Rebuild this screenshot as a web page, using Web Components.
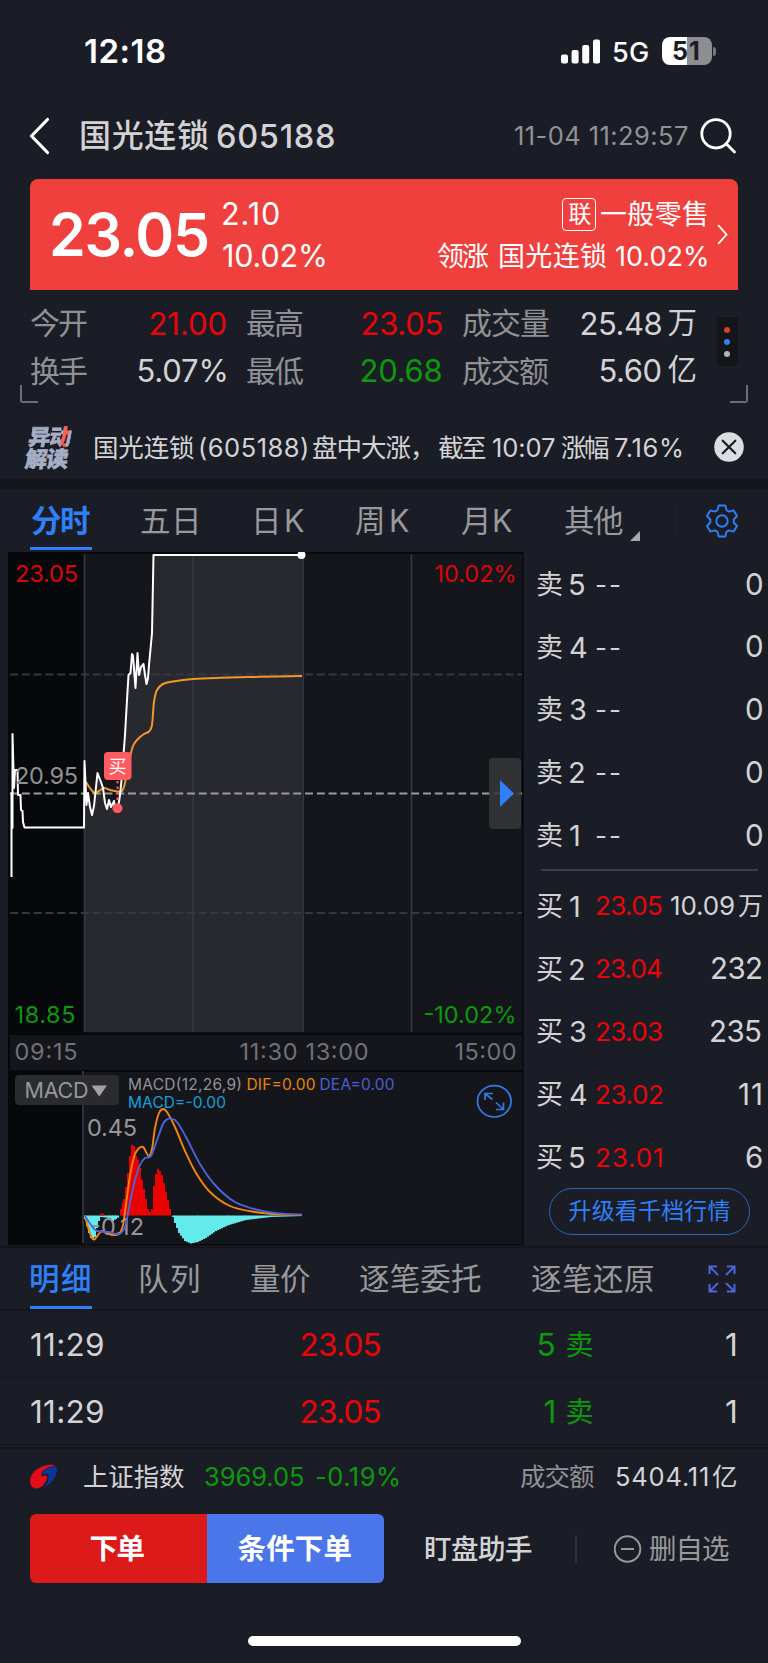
<!DOCTYPE html>
<html lang="zh-CN">
<head>
<meta charset="utf-8">
<title>国光连锁 605188</title>
<style>
body {
  margin: 0;
  background: #1b1d26;
  color: #d3d3d5;
  font-family: Inter, "Noto Sans CJK SC", sans-serif;
}
</style>
</head>
<body>
<stock-page></stock-page>

<script>
// Spreads its text so that the visible glyphs fill exactly `width` pixels.
const measureContext = document.createElement('canvas').getContext('2d');
class FitText extends HTMLElement {
  constructor() {
    super();

    this.attachShadow({ mode: "open" });
    this.shadowRoot.innerHTML = `
<style>
:host {
  display: block;
  flex: none;
  line-height: 1;
}

span {
  display: block;
  white-space: pre;
}
</style>
<span><slot></slot></span>`;
  }

  connectedCallback() {
    const text = this.textContent;
    const width = Number(this.getAttribute("width"));
    const style = getComputedStyle(this);
    measureContext.font = `${style.fontWeight} ${style.fontSize} ${style.fontFamily}`;

    const box = measureContext.measureText(text);
    const ink = box.actualBoundingBoxLeft + box.actualBoundingBoxRight;
    const span = this.shadowRoot.querySelector('span');
    span.style.marginLeft = box.actualBoundingBoxLeft + "px";
    if (text.length > 1) {
      span.style.letterSpacing = (width - ink) / (text.length - 1) + "px";
    }
    this.style.width = width + "px";
  }
}
window.customElements.define('fit-text', FitText);


function defineView(name, html) {
  const template = document.createElement('template');
  template.innerHTML = html;
  window.customElements.define(name, class extends HTMLElement {
    constructor() {
      super();

      this.attachShadow({ mode: "open" });
      this.shadowRoot.appendChild(template.content.cloneNode(true));
    }
  });
}


defineView('status-bar', `
<style>
:host {
  display: flex;
  align-items: center;
  height: 102px;
  padding: 0 52px 0 85px;
  color: #fff;
}

.time {
  font-size: 33px;
  font-weight: 600;
  margin-right: auto;
}

.network {
  font-size: 27px;
  font-weight: 500;
  margin: 2px 14px 0 13px;
}

.battery {
  display: flex;
  align-items: center;
  justify-content: center;
  box-sizing: border-box;
  width: 50px;
  height: 28px;
  padding: 1px 2px 0 0;
  border-radius: 8px;
  background: linear-gradient(90deg, #fff 50%, #8e8e92 50%);
  color: #1b1d26;
  font-size: 25px;
  font-weight: 700;
}

.nub {
  width: 3px;
  height: 9px;
  margin-left: 1px;
  border-radius: 0 3px 3px 0;
  background: #77787d;
}
</style>
<fit-text class="time" width="80">12:18</fit-text>
<svg width="39" height="25" viewBox="0 0 39 25" fill="#fff">
  <rect x="0" y="15.5" width="7" height="9" rx="2"/>
  <rect x="10.6" y="11" width="7" height="13.5" rx="2"/>
  <rect x="21.2" y="6" width="7" height="18.5" rx="2"/>
  <rect x="32" y="0.5" width="7" height="24" rx="2"/>
</svg>
<fit-text class="network" width="35">5G</fit-text>
<div class="battery"><fit-text width="26">51</fit-text></div>
<div class="nub"></div>`);


defineView('stock-header', `
<style>
:host {
  display: flex;
  align-items: center;
  height: 68px;
  padding: 0 31px 0 29px;
}

.name {
  font-size: 32px;
  font-weight: 500;
  margin-left: 30px;
}

.code {
  font-size: 32.5px;
  font-weight: 500;
  margin: 2px auto 0 8px;
}

time {
  font-size: 25.5px;
  color: #909194;
  margin-right: 12px;
}
</style>
<svg width="22" height="38" viewBox="0 0 22 38" fill="none" stroke="#fff" stroke-width="3.2" stroke-linecap="round" stroke-linejoin="round"><path d="M18.5 2.500 2.500 19 18.500 35.500"/></svg>
<fit-text class="name" width="128">国光连锁</fit-text>
<fit-text class="code" width="117">605188</fit-text>
<time><fit-text width="173">11-04 11:29:57</fit-text></time>
<svg width="37" height="36" viewBox="0 0 37 36" fill="none" stroke="#fff" stroke-width="2.8" stroke-linecap="round"><circle cx="16" cy="15.8" r="14.2"/><path d="m26.5 26 8 8"/></svg>`);


defineView('price-banner', `
<style>
:host {
  display: flex;
  align-items: center;
  box-sizing: border-box;
  height: 111px;
  margin: 9px 30px 0;
  padding: 0 10px 0 22px;
  border-radius: 8px 8px 0 0;
  background: #ef403e;
  color: #fff;
}

.price {
  font-size: 59px;
  font-weight: 600;
}

.change, .sector {
  display: flex;
  flex-direction: column;
  padding-top: 2px;
}

.line {
  display: flex;
  align-items: center;
  height: 42px;
}

.change {
  font-size: 30.5px;
  margin: 0 auto 0 15px;
}

.sector {
  align-items: flex-end;
  font-size: 27px;
  margin-right: 10px;
}

.badge {
  display: flex;
  align-items: center;
  justify-content: center;
  box-sizing: border-box;
  width: 34px;
  height: 33px;
  margin-right: 5px;
  border: 1.5px solid #fff;
  border-radius: 4px;
  font-size: 23px;
}
</style>
<fit-text class="price" width="156">23.05</fit-text>
<div class="change">
  <div class="line"><fit-text width="56">2.10</fit-text></div>
  <div class="line"><fit-text width="102">10.02%</fit-text></div>
</div>
<div class="sector">
  <div class="line"><span class="badge"><fit-text width="21">联</fit-text></span><fit-text width="106">一般零售</fit-text></div>
  <div class="line"><fit-text width="52">领涨</fit-text><fit-text width="106" style="margin-left: 11px">国光连锁</fit-text><fit-text width="91" style="margin-left: 10px">10.02%</fit-text></div>
</div>
<svg width="11" height="21" viewBox="0 0 11 21" fill="none" stroke="#fff" stroke-width="1.8"><path d="M1.2 1.2 9.5 10.5 1.2 19.8"/></svg>`);


defineView('quote-stats', `
<style>
:host {
  display: flex;
  position: relative;
  box-sizing: border-box;
  height: 125px;
  padding: 9px 30px 0 31px;
  font-size: 31px;
}

.grid {
  display: grid;
  grid-template-columns: 57px 116px 57px 116px 86px 125px;
  grid-template-rows: 48px 47px;
  align-items: center;
  column-gap: 21.5px;
}

.grid > :nth-child(odd) {
  font-size: 30px;
  color: #909194;
}

.value {
  display: flex;
  gap: 7px;
  justify-content: flex-end;
}

.value :nth-child(2) {
  font-size: 29.5px;
}

.up { color: #ea0508; }
.down { color: #0a9a0c; }

.more {
  display: flex;
  flex-direction: column;
  align-items: center;
  justify-content: center;
  gap: 6px;
  width: 21px;
  height: 49px;
  margin: 18px 0 0 21px;
  border-radius: 3px;
  background: #141519;
}

.more i {
  width: 6px;
  height: 6px;
  border-radius: 50%;
  background: #b4b4b6;
}

.corner {
  position: absolute;
  bottom: 12px;
  left: 20px;
  width: 16px;
  height: 16px;
  border: solid #6d6e74;
  border-width: 0 0 2px 2px;
  border-radius: 0 0 0 3px;
}

.corner.right {
  left: auto;
  right: 20px;
  transform: scaleX(-1);
}
</style>
<div class="grid">
  <fit-text width="56">今开</fit-text><div class="value up"><fit-text width="75">21.00</fit-text></div>
  <fit-text width="56">最高</fit-text><div class="value up"><fit-text width="79">23.05</fit-text></div>
  <fit-text width="86">成交量</fit-text><div class="value"><fit-text width="80">25.48</fit-text><fit-text width="27">万</fit-text></div>
  <fit-text width="56">换手</fit-text><div class="value"><fit-text width="87">5.07%</fit-text></div>
  <fit-text width="56">最低</fit-text><div class="value down"><fit-text width="80">20.68</fit-text></div>
  <fit-text width="86">成交额</fit-text><div class="value"><fit-text width="60">5.60</fit-text><fit-text width="28">亿</fit-text></div>
</div>
<div class="more"><i style="background: #d3402b"></i><i style="background: #2f7ff7"></i><i></i></div>
<div class="corner"></div>
<div class="corner right"></div>`);


defineView('news-line', `
<style>
:host {
  display: flex;
  align-items: center;
  box-sizing: border-box;
  height: 74px;
  padding: 2px 24px 0 27px;
  border-bottom: 10px solid #15161b;
  font-size: 25.5px;
}

.logo {
  display: flex;
  flex-direction: column;
  gap: 0;
  margin-right: 25px;
  color: #a5aec4;
  font-size: 22px;
  font-weight: 900;
  -webkit-text-stroke: .6px;
  transform: skewX(-8deg);
}

.move {
  background: linear-gradient(95deg, #a5aec4 76%, #fb6156 77% 89%, #a5aec4 90%);
  -webkit-background-clip: text;
  color: transparent;
}

svg {
  margin: 0 0 2px auto;
}
</style>
<div class="logo"><fit-text class="move" width="43">异动</fit-text><fit-text width="43">解读</fit-text></div>
<fit-text width="99">国光连锁</fit-text>
<fit-text width="107" style="margin-left: 6px">(605188)</fit-text>
<fit-text width="106" style="margin-left: 6px">盘中大涨，</fit-text>
<fit-text width="48" style="margin-left: 19px">截至</fit-text>
<fit-text width="62" style="margin-left: 7px">10:07</fit-text>
<fit-text width="48" style="margin-left: 6px">涨幅</fit-text>
<fit-text width="67" style="margin-left: 6px">7.16%</fit-text>
<svg width="30" height="30" viewBox="0 0 30 30"><circle cx="15" cy="15" r="14.8" fill="#dcdde1"/><path d="m8.7 8.7 12.6 12.6m0-12.6L8.7 21.3" stroke="#1b1d26" stroke-width="2.2" stroke-linecap="round"/></svg>`);


defineView('tab-item', `
<style>
:host {
  display: flex;
  position: relative;
  align-items: center;
  gap: 9px;
  box-sizing: border-box;
  height: 100%;
  padding-top: 2px;
  font-size: 30.5px;
  color: #98999b;
}

:host([active]) {
  color: #2f80f8;
  font-weight: 500;
}

:host([active])::after {
  content: "";
  position: absolute;
  left: -1px;
  right: -2px;
  bottom: var(--line-bottom, 0);
  height: 3px;
  background: #2f80f8;
}
</style>
<slot></slot>`);


defineView('period-tabs', `
<style>
:host {
  display: flex;
  align-items: center;
  height: 63px;
  padding: 0 29px 0 31px;
  --line-bottom: 2px;
}

.corner {
  align-self: flex-end;
  margin: 0 auto 11px 7px;
}

.rule {
  width: 1px;
  height: 26px;
  margin-right: 28px;
  background: #22242c;
}
</style>
<tab-item active style="font-weight: 700"><fit-text width="59">分时</fit-text></tab-item>
<tab-item style="margin-left: 51px"><fit-text width="56">五日</fit-text></tab-item>
<tab-item style="margin-left: 59px"><fit-text width="20">日</fit-text><fit-text width="19" style="margin-left: 1px">K</fit-text></tab-item>
<tab-item style="margin-left: 51px"><fit-text width="26">周</fit-text><fit-text width="19">K</fit-text></tab-item>
<tab-item style="margin-left: 51px"><fit-text width="21">月</fit-text><fit-text width="19" style="margin-left: 3px">K</fit-text></tab-item>
<tab-item style="margin-left: 52px"><fit-text width="58">其他</fit-text></tab-item>
<svg class="corner" width="10" height="10" viewBox="0 0 10 10" fill="#a9a9ab"><path d="M10 0V10H0z"/></svg>
<div class="rule"></div>
<svg width="34" height="34" viewBox="0 0 34 34" fill="none" stroke="#2f80f8" stroke-width="1.9" stroke-linejoin="round">
  <path d="M13.7 1.5h6.6l1.3 4.7 2.4 1.4 4.7-1.2 3.3 5.6-3.3 3.5v3l3.3 3.5-3.3 5.6-4.7-1.2-2.4 1.4-1.3 4.7h-6.6l-1.3-4.7-2.4-1.4-4.7 1.2L2 22l3.3-3.5v-3L2 12l3.3-5.6L10 7.6l2.4-1.4z"/>
  <circle cx="17" cy="17" r="5.7"/>
</svg>`);


const PRICE = "11.5,877 11.5,793 12.5,828 12.5,734 14,788 15,770 17.5,770 18,795 20.5,795 21,810 22.5,811 23,822 24.5,827.5 84,827.5";
const SESSION = "84.5,761 86.5,805 88,793 90,807 92,815 94,806 97.5,773 101,782 103,788 105,803 107,809 109,800 111,807 114,801 115,807 118,808 120,795 122,775 125,735 127,700 128.5,675 130.5,673 132,654 133,656 135.5,688 137.5,653 139,675 141,667 143.5,664 145,675 146.5,684 148,678 149,665 152,633 153.5,555 302,555";

// [x, y] pairs for the histogram edge, baseline at 1215.5
const RED = [[120, 1209], [123, 1199], [125, 1187], [127, 1173], [129, 1156], [131, 1145], [133, 1146], [135, 1156], [137, 1160], [139, 1168], [141, 1180], [143, 1189], [145, 1199], [147, 1209], [149, 1212], [151, 1209], [153, 1186], [155, 1174], [157, 1169], [159, 1171], [161, 1175], [163, 1183], [165, 1192], [167, 1200], [169, 1209], [171, 1213]];
const CYAN_EARLY = [[84, 1219], [86, 1226], [88, 1233], [90, 1238], [92, 1240], [94, 1237], [96, 1228], [98, 1221], [100, 1217], [109, 1218], [112, 1221], [115, 1219], [118, 1217]];
const CYAN_LATE = [[172, 1217], [174, 1223], [178, 1233], [184, 1241], [190, 1243.5], [197, 1242], [205, 1238], [215, 1231], [228, 1225], [245, 1220], [270, 1217], [302, 1216]];

function histogram(points, color) {
  let bars = "";
  for (let i = 0; i < points.length - 1; i++) {
    const [x0, y0] = points[i];
    const [x1, y1] = points[i + 1];
    for (let x = x0; x < x1; x += 2) {
      const y = y0 + (y1 - y0) * (x - x0) / (x1 - x0);
      bars += `<rect x="${x}" y="${Math.min(y, 1215.5)}" width="2" height="${Math.abs(y - 1215.5)}"/>`;
    }
  }
  return `<g fill="${color}">${bars}</g>`;
}

// Catmull-Rom through the given points
function smooth(text) {
  const p = text.split(" ").map((pair) => pair.split(",").map(Number));
  let d = `M${p[0]}`;
  for (let i = 0; i < p.length - 1; i++) {
    const a = p[i - 1] || p[i];
    const b = p[i];
    const c = p[i + 1];
    const e = p[i + 2] || c;
    d += `C${b[0] + (c[0] - a[0]) / 6},${b[1] + (c[1] - a[1]) / 6} ${c[0] - (e[0] - b[0]) / 6},${c[1] - (e[1] - b[1]) / 6} ${c}`;
  }
  return d;
}

defineView('price-chart', `
<style>
:host {
  display: block;
  flex: none;
  width: 524px;
  height: 693px;
}

svg {
  display: block;
}

.label { font-size: 23.5px; }
.axis { font-size: 23.5px; fill: #707176; }
.small { font-size: 15.5px; }
</style>
<svg width="524" height="693" viewBox="0 552 524 693" fill="none">
  <rect x="8" y="552" width="515.5" height="693" fill="#07080c"/>
  <rect x="84" y="554" width="438" height="478.5" fill="#15161b"/>
  <rect x="10" y="1035" width="512" height="35" fill="#15161b"/>
  <rect x="83" y="1072" width="439" height="172" fill="#15161b"/>
  <polygon points="${SESSION} 302,1032 84,1032" fill="#28292e"/>
  <path d="M84.5 554V1032M193 554V1032M303.2 554V1032M411.5 554V1032" stroke="#333643" stroke-width="1.8"/>
  <path d="M10 674.5H522M10 913H522" stroke="#353743" stroke-width="2" stroke-dasharray="8 3.8"/>
  <path d="M10 793.5H522" stroke="#9b9b9f" stroke-width="2" stroke-dasharray="8 3.8"/>

  <path d="${smooth("86,782 90,788 94.5,793 99,791 104,788 110,790 118,791.5 122,791 125,783 129,762 133,746 138,739 144,734 149,731.5 152,725 154,702 157,690 163,684 173,681.5 193,679 220,677.8 260,676.8 302,676")}" stroke="#f09727" stroke-width="2"/>
  <g stroke="#fff" stroke-width="2" stroke-linejoin="round">
    <polyline points="${PRICE} ${SESSION}"/>
  </g>
  <circle cx="301.5" cy="555" r="4" fill="#fff"/>
  <path d="M117.5 781V803" stroke="#ff5a5f" stroke-width="2" stroke-dasharray="2.5 3"/>
  <circle cx="117.5" cy="808.3" r="5" fill="#ff5a5f"/>
  <rect x="104" y="752" width="27.5" height="28" rx="4" fill="#ff5a5f"/>
  <text x="108.5" y="773" font-size="18" fill="#fff">买</text>

  <g class="label">
    <text x="15" y="582" textLength="63" fill="#dc0508">23.05</text>
    <text x="434.500" y="582" textLength="82" fill="#dc0508">10.02%</text>
    <text x="15" y="783.500" textLength="63" fill="#8f9095">20.95</text>
    <text x="14.5" y="1022.5" textLength="61" fill="#0a9a0c">18.85</text>
    <text x="423.500" y="1022.5" textLength="93" fill="#0a9a0c">-10.02%</text>
  </g>
  <g class="axis">
    <text x="14.5" y="1060" textLength="63">09:15</text>
    <text x="239.5" y="1060" textLength="58">11:30</text>
    <text x="305.5" y="1060" textLength="63">13:00</text>
    <text x="454.5" y="1060" textLength="62">15:00</text>
  </g>

  <rect x="489" y="758" width="32" height="71" rx="4" fill="#36373a" fill-opacity=".88"/>
  <path d="M500 780 514 793.5 500 807z" fill="#2f80f8"/>

  <path d="M83 1071V1243" stroke="#333643" stroke-width="1.8"/>
  <rect x="15" y="1075" width="104" height="30" rx="4" fill="#292b2f"/>
  <text x="24.5" y="1098" font-size="21.5" textLength="64" fill="#96979b">MACD</text>
  <path d="M91.5 1085.5H107L99.3 1096.5z" fill="#a2a2a5"/>
  <g class="small">
    <text x="128" y="1089.5" textLength="114" fill="#929398">MACD(12,26,9)</text>
    <text x="246.5" y="1089.5" textLength="69" fill="#ee820c">DIF=0.00</text>
    <text x="319.5" y="1089.5" textLength="75" fill="#4661d2">DEA=0.00</text>
    <text x="128" y="1108" textLength="98" fill="#0ea3dc">MACD=-0.00</text>
  </g>
  ${histogram(CYAN_EARLY, "#62ebea")}
  ${histogram(CYAN_LATE, "#62ebea")}
  ${histogram(RED, "#ea0200")}
  <rect x="100" y="1213.5" width="4" height="2" fill="#ea0200"/>
  <text x="87" y="1135.5" font-size="23.5" textLength="50" fill="#96979b">0.45</text>
  <text x="90" y="1234.5" font-size="23.5" textLength="54" fill="#96979b">-0.12</text>
  <path d="${smooth("85,1216 88,1227 91.5,1237 94.5,1239.5 98,1235 102,1231 107,1233 112,1235 119,1234 123,1225 126,1204 130,1176 134,1157 138,1149 143,1147 146,1152 149,1156 152,1149 155,1128 159,1113 163,1109 167,1112 175,1127 185,1151 196,1173 210,1192 230,1206 255,1212 280,1214.5 302,1215")}" stroke="#f5860b" stroke-width="1.9"/>
  <path d="${smooth("85,1216 91,1225 97,1231 108,1232 119,1234 125,1227 129,1208 134,1184 140,1165 145,1158 151,1156 157,1140 163,1124 167,1119.5 171,1118.5 177,1122 186,1137 200,1164 215,1185 235,1202 260,1210.5 280,1213.5 302,1214.5")}" stroke="#4b64db" stroke-width="1.9"/>

  <g stroke="#2f7ce8" stroke-width="1.7">
    <ellipse cx="494.3" cy="1101.3" rx="16.8" ry="15.7"/>
    <path d="M485 1100V1093.5H493M485.5 1094 492.5 1099.5M503.5 1102.5V1109.5H496M503 1109 496 1102.5"/>
  </g>
</svg>`);


class BookRow extends HTMLElement {
  constructor() {
    super();

    this.attachShadow({ mode: "open" });
  }

  connectedCallback() {
    const [side, level, price, amount, unit] = this.getAttribute("cells").split(" ");
    const [priceWidth, amountWidth] = this.getAttribute("widths").split(" ");
    this.shadowRoot.innerHTML = `
<style>
:host {
  display: flex;
  align-items: center;
  height: 62.8px;
  font-size: 29.5px;
}

.side { font-size: 27px; margin-right: 8px; }
.level { font-size: 29px; margin-right: ${level === "1" ? 16 : 11}px; }
.price { font-size: 26px; color: #ea0508; margin-right: auto; }
.price.empty { color: inherit; padding-top: 1px; }
.unit { font-size: 25px; margin-left: 4px; }
.short { font-size: 26px; }
</style>
<fit-text class="side" width="25">${side}</fit-text>
<fit-text class="level" width="${level === "1" ? 10 : 15}">${level}</fit-text>
<fit-text class="price ${price === "--" ? "empty" : ""}" width="${priceWidth}">${price}</fit-text>
<fit-text class="${unit ? "short" : ""}" width="${amountWidth}">${amount}</fit-text>
${unit ? `<fit-text class="unit" width="23">${unit}</fit-text>` : ""}`;
  }
}
window.customElements.define('book-row', BookRow);


defineView('order-book', `
<style>
:host {
  display: flex;
  flex: 1;
  flex-direction: column;
  box-sizing: border-box;
  padding: 1px 7px 0 13px;
}

hr {
  width: 217px;
  height: 2px;
  margin: 2px 0 4px 4px;
  border: 0;
  background: #3c3e47;
}

.upgrade {
  display: flex;
  align-items: center;
  justify-content: center;
  box-sizing: border-box;
  width: 201px;
  height: 47px;
  margin: -1px 0 0 12px;
  border: 1.5px solid #2866bd;
  border-radius: 24px;
  color: #2f80f8;
  font-size: 23px;
}
</style>
<book-row cells="卖 5 -- 0" widths="24 15"></book-row>
<book-row cells="卖 4 -- 0" widths="24 15"></book-row>
<book-row cells="卖 3 -- 0" widths="24 15"></book-row>
<book-row cells="卖 2 -- 0" widths="24 15"></book-row>
<book-row cells="卖 1 -- 0" widths="24 15"></book-row>
<hr>
<book-row cells="买 1 23.05 10.09 万" widths="66 63"></book-row>
<book-row cells="买 2 23.04 232" widths="66 49"></book-row>
<book-row cells="买 3 23.03 235" widths="66 50"></book-row>
<book-row cells="买 4 23.02 11" widths="66 22"></book-row>
<book-row cells="买 5 23.01 6" widths="66 15"></book-row>
<div class="upgrade"><fit-text width="162">升级看千档行情</fit-text></div>`);


defineView('detail-tabs', `
<style>
:host {
  display: flex;
  align-items: center;
  height: 61px;
  padding: 0 32px 0 31px;
  border: solid #15161b;
  border-width: 3px 0 2px;
}

svg {
  margin-left: auto;
}
</style>
<tab-item active><fit-text width="59">明细</fit-text></tab-item>
<tab-item style="margin-left: 51px"><fit-text width="58">队列</fit-text></tab-item>
<tab-item style="margin-left: 52px"><fit-text width="59">量价</fit-text></tab-item>
<tab-item style="margin-left: 50px"><fit-text width="121">逐笔委托</fit-text></tab-item>
<tab-item style="margin-left: 51px"><fit-text width="121">逐笔还原</fit-text></tab-item>
<svg width="28" height="28" viewBox="0 0 28 28" fill="none" stroke="#4a66db" stroke-width="2"><path d="M1.5 9V1.5H9M1.5 1.5 10 10M19 1.5H26.5V9M26.5 1.5 18 10M1.5 19V26.5H9M1.5 26.5 10 18M19 26.5H26.5V19M26.5 26.5 18 18"/></svg>`);


class TradeRow extends HTMLElement {
  constructor() {
    super();

    this.attachShadow({ mode: "open" });
  }

  connectedCallback() {
    const lots = this.getAttribute("lots");
    this.shadowRoot.innerHTML = `
<style>
:host {
  display: grid;
  grid-template-columns: 270.5px 222px 69px 1fr;
  align-items: center;
  height: 67px;
  padding: 1px 32px 0 31px;
  box-sizing: border-box;
  border-bottom: 1px solid #17181e;
  font-size: 31.5px;
}

.up { color: #ea0508; }

.lots {
  display: flex;
  align-items: center;
  justify-content: flex-end;
  gap: 12px;
  color: #0a9a0c;
}

.lots :last-child { font-size: 28px; }
.count { justify-self: end; }
</style>
<fit-text width="72">11:29</fit-text>
<fit-text class="up" width="79">23.05</fit-text>
<div class="lots"><fit-text width="${lots === "1" ? 10 : 16}">${lots}</fit-text><fit-text width="26">卖</fit-text></div>
<fit-text class="count" width="10">1</fit-text>`;
  }
}
window.customElements.define('trade-row', TradeRow);


defineView('index-line', `
<style>
:host {
  display: flex;
  align-items: center;
  height: 56px;
  margin-top: 2px;
  padding: 0 32px 0 30px;
  border-top: 2px solid #15161b;
  font-size: 25.5px;
}

.down { color: #0a9a0c; }
.muted { color: #909194; }

.logo {
  margin-bottom: 2px;
}
</style>
<svg class="logo" width="28" height="25" viewBox="0 0 28 25">
  <path d="M26 2.5C20-2 8 3 3 9-1 14-1 22 4 24 10 26 16 20 17 14 17.500 11 14 11 12 13 10 10 13 6 17 4 20 2.500 24 2 26 2.500z" fill="#e50b17"/>
  <path d="M26.5 3C28 6 26 13 21 18.500 18.500 21 16 22.500 14 23 18 19 19.500 14 18.500 11.500 17.500 9 14.500 9.500 12.500 11.500 12 8 15 5 18 3.800 21 2.500 25 2 26.500 3z" fill="#0c339a"/>
</svg>
<fit-text width="100" style="margin-left: 26px">上证指数</fit-text>
<fit-text class="down" width="98" style="margin-left: 21px">3969.05</fit-text>
<fit-text class="down" width="83" style="margin-left: 13px">-0.19%</fit-text>
<fit-text class="muted" width="74" style="margin-left: auto">成交额</fit-text>
<fit-text width="92" style="margin-left: 22px">5404.11</fit-text>
<fit-text width="24" style="margin-left: 4px">亿</fit-text>`);


defineView('action-bar', `
<style>
:host {
  display: flex;
  align-items: center;
  height: 69px;
  margin: 9px 39px 0 30px;
  font-size: 27.5px;
}

.order {
  display: flex;
  align-items: center;
  justify-content: center;
  box-sizing: border-box;
  width: 177px;
  height: 69px;
  padding: 2px 2px 0 0;
  color: #fff;
  font-size: 28.5px;
  font-weight: 700;
}

.buy {
  border-radius: 6px 0 0 6px;
  background: #dc1a19;
}

.conditional {
  border-radius: 0 6px 6px 0;
  background: #4a76e9;
}

.watch {
  margin: 2px 0 0 41px;
  font-weight: 500;
}

.rule {
  width: 2px;
  height: 28px;
  margin: 0 37px 0 auto;
  background: #30323c;
}

.remove {
  display: flex;
  align-items: center;
  gap: 8px;
  color: #98999b;
}

.remove fit-text {
  margin-top: 2px;
}
</style>
<div class="order buy"><fit-text width="54">下单</fit-text></div>
<div class="order conditional"><fit-text width="114">条件下单</fit-text></div>
<fit-text class="watch" width="107">盯盘助手</fit-text>
<div class="rule"></div>
<div class="remove">
  <svg width="28" height="28" viewBox="0 0 28 28" fill="none" stroke="currentColor" stroke-width="2"><circle cx="13.5" cy="14" r="12.800"/><path d="M7 14H20"/></svg>
  <fit-text width="79">删自选</fit-text>
</div>`);


defineView('stock-page', `
<style>
:host {
  display: flex;
  flex-direction: column;
  width: 768px;
  height: 1663px;
  overflow: hidden;
}

.main {
  display: flex;
  flex: none;
  height: 693px;
}

.home {
  width: 273px;
  height: 10px;
  margin: 53px 0 0 248px;
  border-radius: 5px;
  background: #fff;
}
</style>
<status-bar></status-bar>
<stock-header></stock-header>
<price-banner></price-banner>
<quote-stats></quote-stats>
<news-line></news-line>
<period-tabs></period-tabs>
<div class="main">
  <price-chart></price-chart>
  <order-book></order-book>
</div>
<detail-tabs></detail-tabs>
<trade-row lots="5"></trade-row>
<trade-row lots="1"></trade-row>
<index-line></index-line>
<action-bar></action-bar>
<div class="home"></div>`);
</script>
</body>
</html>
